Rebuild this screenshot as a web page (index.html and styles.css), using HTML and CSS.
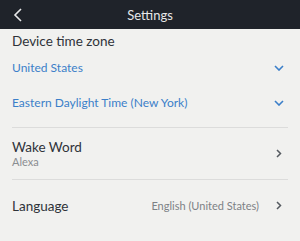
FILE: index.html
```html
<!DOCTYPE html>
<html>
<head>
<meta charset="utf-8">
<link rel="stylesheet" href="styles.css">
</head>
<body>
<header class="topbar">
  <div class="back">
    <svg width="10" height="14" viewBox="0 0 10 14"><path d="M8 1 L2 7 L8 13" fill="none" stroke="#e8e9ea" stroke-width="1.6"/></svg>
  </div>
  <div class="title">Settings</div>
  <div></div>
</header>
<main class="content">
  <div class="section-title">Device time zone</div>
  <div class="select-row">
    <span class="select-text">United States</span>
    <svg class="down" width="10" height="6" viewBox="0 0 10 6"><path d="M1 1 L5 5 L9 1" fill="none" stroke="#3b7fc9" stroke-width="1.6"/></svg>
  </div>
  <div class="select-row">
    <span class="select-text">Eastern Daylight Time (New York)</span>
    <svg class="down" width="10" height="6" viewBox="0 0 10 6"><path d="M1 1 L5 5 L9 1" fill="none" stroke="#3b7fc9" stroke-width="1.6"/></svg>
  </div>
  <div class="divider first"></div>
  <div class="nav-row tall">
    <div class="labels">
      <div class="label">Wake Word</div>
      <div class="sub">Alexa</div>
    </div>
    <svg class="right" width="6" height="9" viewBox="0 0 6 9"><path d="M1 1 L4.5 4.5 L1 8" fill="none" stroke="#555a60" stroke-width="1.5"/></svg>
  </div>
  <div class="divider"></div>
  <div class="nav-row">
    <div class="label">Language</div>
    <div class="value">English (United States)</div>
    <svg class="right" width="6" height="9" viewBox="0 0 6 9"><path d="M1 1 L4.5 4.5 L1 8" fill="none" stroke="#555a60" stroke-width="1.5"/></svg>
  </div>
</main>
</body>
</html>
```
FILE: styles.css
```css
html, body {
  margin: 0;
  padding: 0;
}
body {
  width: 300px;
  height: 241px;
  background: #f1f1ef;
  font-family: Lato, "Open Sans", sans-serif;
  overflow: hidden;
}
.topbar {
  height: 29px;
  background: #1f232a;
  display: grid;
  grid-template-columns: 1fr auto 1fr;
  align-items: center;
}
.back {
  padding-left: 13px;
  display: flex;
  align-items: center;
}
.title {
  color: #e6e7e8;
  font-size: 13px;
}
.content {
  display: flex;
  flex-direction: column;
}
.section-title {
  height: 17px;
  line-height: 17px;
  padding: 4px 12px 0;
  color: #2f3339;
  font-size: 13.5px;
}
.select-row {
  height: 35px;
  display: flex;
  align-items: center;
  justify-content: space-between;
  padding: 0 16px 0 12px;
}
.select-text {
  color: #3b7fc9;
  font-size: 12px;
}
.divider {
  height: 1px;
  background: #dcdcdb;
  margin: 0 12px;
}
.divider.first {
  margin-top: 7px;
}
.nav-row {
  height: 51px;
  display: flex;
  align-items: center;
  padding: 0 18px 0 12px;
}
.labels {
  display: flex;
  flex-direction: column;
}
.label {
  color: #2f3339;
  font-size: 13.5px;
  line-height: 16px;
}
.sub {
  color: #8a8d91;
  font-size: 11px;
  line-height: 13px;
}
.value {
  margin-left: auto;
  color: #7d8186;
  font-size: 11px;
  margin-right: 17px;
}
.nav-row .labels + .right {
  margin-left: auto;
}
```
